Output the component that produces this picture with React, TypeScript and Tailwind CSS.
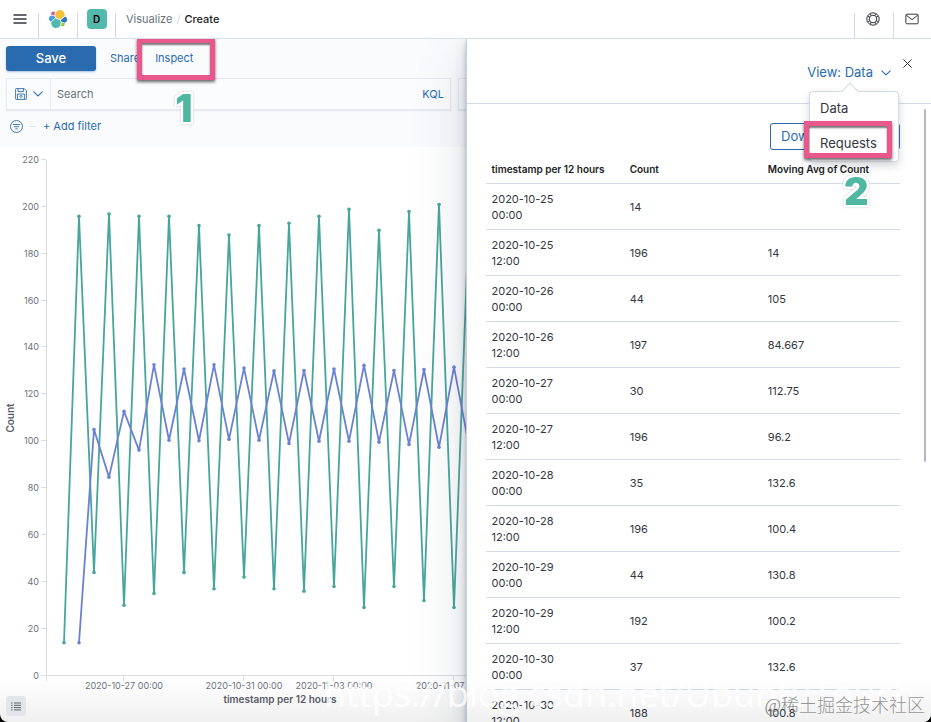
import type { ReactNode } from 'react'

type Row = {
  date: string
  time: string
  count: number
  avg: number | null
}

const rows: Row[] = [
  { date: '2020-10-25', time: '00:00', count: 14, avg: null },
  { date: '2020-10-25', time: '12:00', count: 196, avg: 14 },
  { date: '2020-10-26', time: '00:00', count: 44, avg: 105 },
  { date: '2020-10-26', time: '12:00', count: 197, avg: 84.667 },
  { date: '2020-10-27', time: '00:00', count: 30, avg: 112.75 },
  { date: '2020-10-27', time: '12:00', count: 196, avg: 96.2 },
  { date: '2020-10-28', time: '00:00', count: 35, avg: 132.6 },
  { date: '2020-10-28', time: '12:00', count: 196, avg: 100.4 },
  { date: '2020-10-29', time: '00:00', count: 44, avg: 130.8 },
  { date: '2020-10-29', time: '12:00', count: 192, avg: 100.2 },
  { date: '2020-10-30', time: '00:00', count: 37, avg: 132.6 },
  { date: '2020-10-30', time: '12:00', count: 188, avg: 100.8 },
]

// the chart runs past the rows that fit in the inspector
const counts = [
  ...rows.map((row) => row.count),
  42, 192, 37, 193, 36, 196, 38, 199, 29, 190, 38, 198, 32, 201, 29, 196,
]

const averages = [
  ...rows.slice(1).map((row) => row.avg ?? 0),
  131.2, 100.4, 130, 99, 130.2, 100, 130.8, 100, 132.4, 99.6, 130.2, 98.6,
  130.6, 97.4, 131.6, 98,
]

const yTicks = [0, 20, 40, 60, 80, 100, 120, 140, 160, 180, 200, 220]

const xTicks = [
  { x: 124, label: '2020-10-27 00:00' },
  { x: 244, label: '2020-10-31 00:00' },
  { x: 334, label: '2020-11-03 00:00' },
  { x: 454, label: '2020-11-07 00:00' },
]

const toX = (index: number) => 64 + index * 15
const toY = (value: number) => 528.5 - value * 2.343

function Series({ values, start, color }: { values: number[]; start: number; color: string }) {
  const points = values.map((value, i) => ({ x: toX(i + start), y: toY(value) }))

  return (
    <g>
      <polyline
        points={points.map((p) => `${p.x},${p.y}`).join(' ')}
        fill="none"
        stroke={color}
        strokeWidth="1.8"
        strokeLinejoin="round"
      />
      {points.map((p) => (
        <circle key={p.x} cx={p.x} cy={p.y} r="1.8" fill={color} />
      ))}
    </g>
  )
}

function Chart() {
  return (
    <svg width="931" height="575" className="block shrink-0" role="img" aria-label="Count per 12 hours">
      <g stroke="#dcdde0" strokeWidth="1">
        <path d="M46.5 13V534M41 528.5H931" />
        {yTicks.map((tick) => (
          <path key={tick} d={`M41 ${Math.round(toY(tick)) - 0.5}H46`} />
        ))}
        {xTicks.map((tick) => (
          <path key={tick.x} d={`M${tick.x - 0.5} 529V534`} />
        ))}
      </g>
      <g className="fill-[#6c727e] text-[9px]">
        {yTicks.map((tick) => (
          <text key={tick} x="39" y={Math.round(toY(tick)) + 3} textAnchor="end">
            {tick}
          </text>
        ))}
        {xTicks.map((tick) => (
          <text key={tick.x} x={tick.x} y="542" textAnchor="middle">
            {tick.label}
          </text>
        ))}
      </g>
      <g className="fill-[#5b606b] text-[10px] font-semibold">
        <text x="280" y="556" textAnchor="middle">
          timestamp per 12 hours
        </text>
        <text transform="translate(14 271) rotate(-90)" textAnchor="middle">
          Count
        </text>
      </g>
      <Series values={counts} start={0} color="#47a69b" />
      <Series values={averages} start={1} color="#6b81d3" />
    </svg>
  )
}

function ChevronDown() {
  return (
    <svg width="10" height="6" viewBox="0 0 10 6" fill="none" stroke="currentColor" strokeWidth="1.1" strokeLinecap="round" strokeLinejoin="round">
      <path d="M0.8 0.8L5 4.8L9.2 0.8" />
    </svg>
  )
}

function ElasticLogo() {
  return (
    <svg width="20" height="20" viewBox="0 0 32 32">
      <path fill="#f3c23a" d="M12.58 13.787l7.002 3.211 7.066-6.213a7.849 7.849 0 00.152-1.557c0-4.287-3.477-7.774-7.753-7.774a7.731 7.731 0 00-6.402 3.388L11.47 10.974l1.11 2.813z" />
      <path fill="#50b9b0" d="M5.333 21.228a7.964 7.964 0 00-.153 1.573c0 4.3 3.49 7.797 7.779 7.797a7.749 7.749 0 006.411-3.411l1.165-6.093-1.556-2.985-7.03-3.214-6.616 6.333z" />
      <path fill="#e2528f" d="M5.288 9.067l4.8 1.137L11.14 4.73a3.785 3.785 0 00-6.09 3.012c0 .458.081.904.238 1.325z" />
      <path fill="#4a9fe0" d="M4.87 10.214a5.294 5.294 0 00-3.507 5.01 5.342 5.342 0 003.414 4.985l6.732-6.107-1.235-2.652-5.404-1.236z" />
      <path fill="#98c840" d="M20.87 27.189a3.754 3.754 0 002.287.784 3.792 3.792 0 003.783-3.79 3.76 3.76 0 00-.237-1.32l-4.797-1.126-1.036 5.452z" />
      <path fill="#2f74c0" d="M21.848 20.563l5.28 1.24a5.34 5.34 0 003.507-5.007 5.332 5.332 0 00-3.41-4.973l-6.904 6.07 1.527 2.67z" />
    </svg>
  )
}

function StepNumber({ children }: { children: ReactNode }) {
  return (
    <span className="block text-[38px] leading-10 font-black text-[#50b7a0] drop-shadow-[0_0_1px_#c3cccc] [text-shadow:2px_0_#fff,-2px_0_#fff,0_2px_#fff,0_-2px_#fff,2px_2px_#fff,-2px_-2px_#fff,2px_-2px_#fff,-2px_2px_#fff]">
      {children}
    </span>
  )
}

function Header() {
  return (
    <header className="flex h-[39px] shrink-0 items-center border-b border-[#d8dde7] bg-white shadow-[0_1px_1px_#d8dde780]">
      <button aria-label="Menu" className="flex w-10 justify-center text-[#343741]">
        <svg width="14" height="12" viewBox="0 0 14 12" stroke="currentColor" strokeWidth="1.6">
          <path d="M0.5 2H13.5M0.5 6H13.5M0.5 10H13.5" />
        </svg>
      </button>
      <a href="#home" aria-label="Elastic" className="-ml-0.5 flex h-[25px] w-[39px] justify-center self-end border-l border-[#d3dae6]">
        <span className="-mt-1">
          <ElasticLogo />
        </span>
      </a>
      <div className="flex h-[25px] w-[38px] justify-center self-end border-l border-[#d3dae6]">
        <button className="-mt-1 size-5 rounded-sm bg-[#54b9ad] text-[10px] font-semibold text-black">
          D
        </button>
      </div>
      <nav className="flex h-[25px] flex-1 items-start gap-1 self-end border-l border-[#d3dae6] pl-2.5 text-[11px] leading-3">
        <a href="#visualize" className="text-[#69707d]">Visualize</a>
        <span className="text-[#d3dae6]">/</span>
        <span className="font-medium text-[#1a1c21]">Create</span>
      </nav>
      <div className="flex h-[25px] w-[39px] justify-center self-end border-l border-[#d3dae6] pr-0.5">
        <button aria-label="Help" className="-mt-1 flex h-5 items-center text-[#343741]">
          <svg width="14" height="14" viewBox="0 0 14 14" fill="none" stroke="currentColor">
            <circle cx="7" cy="7" r="6.2" />
            <circle cx="7" cy="7" r="3.8" />
            <path d="M4.2 1.6L5.2 3.7M9.8 1.6L8.8 3.7M4.2 12.4L5.2 10.3M9.8 12.4L8.8 10.3M1.6 4.2L3.7 5.2M1.6 9.8L3.7 8.8M12.4 4.2L10.3 5.2M12.4 9.8L10.3 8.8" />
          </svg>
        </button>
      </div>
      <div className="flex h-[25px] w-[38px] justify-center self-end border-l border-[#d3dae6] pr-0.5">
        <button aria-label="Newsfeed" className="-mt-1 flex h-5 items-center text-[#343741]">
          <svg width="14" height="12" viewBox="0 0 14 12" fill="none" stroke="currentColor">
            <rect x="0.9" y="1.2" width="12.2" height="9.6" rx="1" />
            <path d="M1.2 2L6 6Q7 6.8 8 6L12.8 2" />
          </svg>
        </button>
      </div>
    </header>
  )
}

function Toolbar() {
  return (
    <div className="shrink-0 bg-[#fafbfd]">
      <div className="flex h-[39px] items-center px-1.5 text-[11px] text-[#2a6bb0]">
        <button className="h-[25px] w-[90px] rounded-[3px] bg-[#2a6aaf] text-[13px] font-medium text-white shadow-[0_1px_2px_#2a6aaf66]">
          Save
        </button>
        <button className="pl-3.5">Share</button>
        <div className="relative ml-[15px]">
          <button>Inspect</button>
          <div className="pointer-events-none absolute -top-3 -left-[18px] h-[42px] w-[78px] border-[5px] border-[#e9578b] shadow-[0_2px_3px_#0009,inset_0_2px_2px_#0008]" />
          <div className="pointer-events-none absolute top-[38px] left-5">
            <StepNumber>1</StepNumber>
          </div>
        </div>
      </div>

      <div className="flex gap-[7px] px-1.5 text-[11px]">
        <div className="flex h-8 flex-1 items-center border border-[#e6eaf1] bg-[#fbfcfd] shadow-[0_1px_1px_#d3dae680]">
          <button aria-label="Saved queries" className="flex h-full w-11 items-center justify-center gap-1.5 border-r border-[#e6eaf1] text-[#2a6bb0]">
            <svg width="12" height="12" viewBox="0 0 12 12" fill="none" stroke="currentColor" strokeWidth="0.9">
              <path d="M0.6 1.2Q0.6 0.6 1.2 0.6H9.2L11.4 2.8V10.8Q11.4 11.4 10.8 11.4H1.2Q0.6 11.4 0.6 10.8Z" />
              <path d="M3 0.8V3.6H8.4V0.8M2.6 11.2V6H9.4V11.2" />
              <circle cx="6" cy="8.4" r="1" />
            </svg>
            <ChevronDown />
          </button>
          <input
            type="text"
            aria-label="Search"
            placeholder="Search"
            className="min-w-0 flex-1 bg-transparent pl-1.5 outline-none placeholder:text-[#69707d]"
          />
          <button className="pr-1.5 text-[#2a6bb0]">KQL</button>
        </div>
        <div className="h-8 w-[467px] shrink-0 border border-[#e6eaf1] shadow-[0_1px_1px_#d3dae680]" />
      </div>

      <div className="flex h-[37px] items-center pb-1 pl-2.5 text-[11px] text-[#2a6bb0]">
        <button aria-label="Filter options">
          <svg width="13" height="13" viewBox="0 0 13 13" fill="none" stroke="currentColor" strokeWidth="0.9">
            <circle cx="6.5" cy="6.5" r="6" />
            <path d="M3 4.5H10M4 6.7H9M5.2 8.9H7.8" />
          </svg>
        </button>
        <span className="ml-1.5 h-px w-[7px] bg-[#e3e7ee]" />
        <button className="ml-[7px]">+ Add filter</button>
      </div>
    </div>
  )
}

function ViewMenu() {
  return (
    <div className="relative">
      <button className="flex items-center gap-2 text-[13px] text-[#2a6bb0]">
        View: Data
        <ChevronDown />
      </button>
      <div className="absolute top-7 -right-2 z-10 w-[90px] rounded-sm border border-[#d3dae6] bg-white text-[13px] text-[#343741] shadow-[0_4px_8px_#343b4d33]">
        <span className="absolute -top-[7px] left-[34px] size-3 rotate-45 border-t border-l border-[#d3dae6] bg-white" />
        <button className="relative block h-[33px] w-full pl-2.5 text-left">Data</button>
        <div className="relative">
          <button className="block h-9 w-full pl-2.5 text-left">Requests</button>
          <div className="pointer-events-none absolute -top-1 -left-1.5 h-[37px] w-[88px] border-[5px] border-[#e9578b] shadow-[0_2px_3px_#0009,inset_0_2px_2px_#0008]" />
          <div className="pointer-events-none absolute top-[46px] left-[34px]">
            <StepNumber>2</StepNumber>
          </div>
        </div>
      </div>
    </div>
  )
}

function Inspector() {
  return (
    <aside className="absolute inset-y-0 right-0 flex w-1/2 flex-col border-l border-[#c9ced8] bg-white shadow-[0_2px_4px_#414e654d,0_6px_12px_#414e6533,0_20px_50px_#414e6533]">
      <div className="relative flex h-[65px] shrink-0 items-center justify-end border-b border-[#d3dae6] pt-1 pr-10">
        <ViewMenu />
        <button aria-label="Close" className="absolute top-5 right-[19px] text-[#343741]">
          <svg width="9" height="9" viewBox="0 0 9 9" stroke="currentColor" strokeLinecap="round">
            <path d="M0.7 0.7L8.3 8.3M8.3 0.7L0.7 8.3" />
          </svg>
        </button>
      </div>

      <div className="flex min-h-0 flex-1 justify-between gap-6 pt-[5px] pr-[5px] pl-[19px]">
        <div className="min-w-0 flex-1 overflow-hidden pt-3.5">
          <div className="flex justify-end">
            <button className="flex h-[27px] w-[130px] items-center justify-between rounded-[3px] border border-[#2a6bb0] px-2.5 text-[13px] whitespace-nowrap text-[#2a6bb0]">
              Download CSV
              <ChevronDown />
            </button>
          </div>

          <table className="w-full table-fixed text-left text-[11px] leading-4 text-[#343741]">
            <thead>
              <tr className="h-[33px] border-b border-[#d3dae6] text-[10px] text-[#1a1c21]">
                <th className="px-1.5 pt-1.5 font-semibold">timestamp per 12 hours</th>
                <th className="px-1.5 pt-1.5 font-semibold">Count</th>
                <th className="px-1.5 pt-1.5 font-semibold">Moving Avg of Count</th>
              </tr>
            </thead>
            <tbody>
              {rows.map((row) => (
                <tr key={row.date + row.time} className="h-[46px] border-b border-[#d3dae6]">
                  <td className="px-1.5 pt-0.5">
                    {row.date}
                    <br />
                    {row.time}
                  </td>
                  <td className="px-1.5 pt-0.5">{row.count}</td>
                  <td className="px-1.5 pt-0.5">{row.avg}</td>
                </tr>
              ))}
            </tbody>
          </table>
        </div>
        <div className="h-[353px] w-0.5 shrink-0 rounded-full bg-[#b4b7bd]" />
      </div>
    </aside>
  )
}

function App() {
  return (
    <div className="h-screen bg-black font-['Inter',sans-serif]">
      <div className="relative flex h-full flex-col overflow-hidden rounded-b-lg bg-white">
        <Header />
        <main className="relative flex min-h-0 flex-1 flex-col overflow-hidden">
          <Toolbar />
          <Chart />
          <Inspector />
        </main>

        <div className="pointer-events-none absolute inset-x-0 bottom-0 h-11 bg-linear-to-b from-transparent to-black/6" />
        <button aria-label="Toggle legend" className="absolute bottom-1.5 left-1.5 flex size-5 items-center justify-center rounded-[3px] bg-[#e3e5e8] text-[#5a606b]">
          <svg width="10" height="9" viewBox="0 0 10 9" stroke="currentColor">
            <path d="M0 1H1.5M3 1H10M0 3.3H1.5M3 3.3H10M0 5.6H1.5M3 5.6H10M0 7.9H1.5M3 7.9H10" />
          </svg>
        </button>
        <div className="pointer-events-none absolute right-4 bottom-1 font-['Open_Sans',sans-serif] text-[36px] leading-[48px] whitespace-nowrap text-white/80">
          https://blog.csdn.net/UbuntuTouch
        </div>
        <div className="pointer-events-none absolute right-1.5 bottom-1 font-['Liberation_Serif','Noto_Sans_CJK_SC',sans-serif] text-lg leading-6 font-light whitespace-nowrap text-[#777]/80">
          @稀土掘金技术社区
        </div>
      </div>
    </div>
  )
}

export default App
